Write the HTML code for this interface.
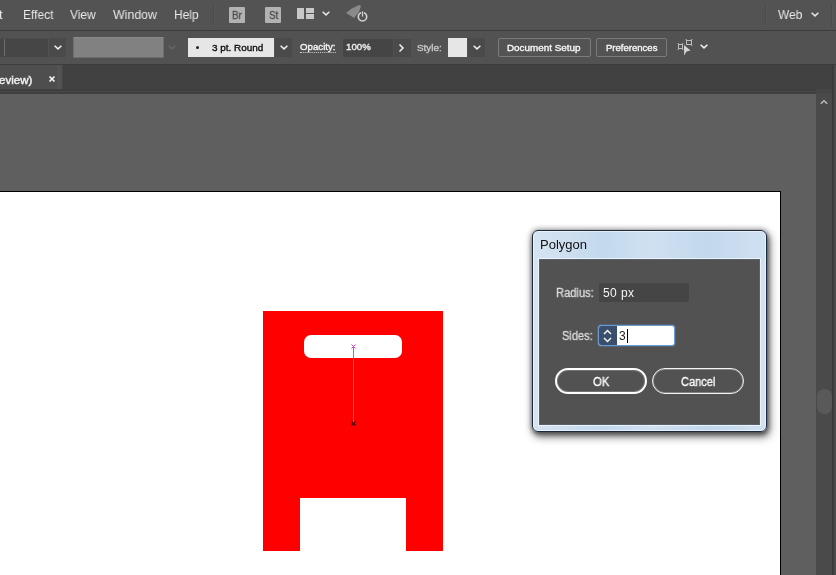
<!DOCTYPE html>
<html lang="en">
<head>
<meta charset="utf-8">
<title>Polygon</title>
<style>
*{box-sizing:border-box;margin:0;padding:0}
html,body{width:836px;height:575px;overflow:hidden;background:#5e5e5e}
body{position:relative;font-family:"Liberation Sans",sans-serif;font-size:12px;color:#e8e8e8;-webkit-font-smoothing:antialiased}
.abs,.t,svg{position:absolute}
.t{white-space:nowrap;line-height:1;transform-origin:0 50%;display:block;will-change:transform}
/* bars */
#menubar{left:0;top:0;width:836px;height:31px;background:#535353;border-bottom:1px solid #3c3c3c}
#ctrlbar{left:0;top:31px;width:836px;height:34px;background:#525252;border-bottom:1px solid #3c3c3c}
#tabbar{left:0;top:65px;width:836px;height:29px;background:linear-gradient(#414141 0,#414141 24px,#3e3e3e 24px,#3e3e3e 26px,#474747 26px,#474747 27px,#3f3f3f 27px)}
#tab{left:0;top:65px;width:63px;height:24px;background:#4e4e4e;border-right:1px solid #454545;box-shadow:inset -5px 0 0 #525252}
#canvas{left:0;top:94px;width:816px;height:481px;background:#5f5f5f}
#vscroll{left:816px;top:89px;width:16px;height:486px;background:#4a4a4a;border-top:5px solid #464646}
#vedge{left:832px;top:65px;width:4px;height:510px;background:#4b4b4b;border-left:2px solid #3b3b3b}
#thumb{left:817px;top:389px;width:15px;height:25px;border-radius:7px;background:#595959}
#artboard{left:0;top:191px;width:781px;height:384px;background:#fff;border-top:1px solid #000;border-right:1px solid #000}
.sep{width:1px;background:#4a4a4a;border-right:1px solid #585858;box-sizing:content-box}
.ico{background:#b2b2b2;color:#4c4c4c;border-radius:1px}
.ico .t{-webkit-text-stroke:.3px #4c4c4c}
.dk{background:#454545}
.btn{border:1px solid #7b7b7b;border-radius:2px;background:#535353}
.chevbox{background:#4a4a4a}
.lb{-webkit-text-stroke:.3px currentColor}
.cb{top:44px;font-size:9.2px;-webkit-text-stroke:.35px currentColor}
/* art */
#red{left:263px;top:311px;width:180px;height:240px;background:#fe0000}
#slot{left:304px;top:335px;width:98px;height:23px;border-radius:7px;background:#fff}
#notch{left:300px;top:498px;width:106px;height:54px;background:#fff}
#mline{left:353px;top:347px;width:1px;height:76px;background:#f535d6}
/* dialog */
#dshadow{left:532px;top:230px;width:235px;height:202px;border-radius:6px;box-shadow:0 0 5px 1px rgba(0,0,0,.3),2px 4px 9px 1px rgba(0,0,0,.5),1px 3px 4px rgba(0,0,0,.3)}
#dialog{left:532px;top:230px;width:235px;height:202px;border-radius:6px;border:1px solid #1d2a3c;background:linear-gradient(90deg,#d6e4f2 0%,#c4d9ee 30%,#cfe0f1 50%,#c3d8ed 75%,#d0e1f1 100%);box-shadow:inset 0 0 0 1px rgba(255,255,255,.55)}
#dbody{left:539px;top:259px;width:221px;height:166px;background:#525252;border:1px solid #5a626c;box-shadow:0 0 0 1px rgba(255,255,255,.6)}
#rinput{left:599px;top:283px;width:90px;height:19px;background:#454545;border-radius:2px}
#spin{left:598px;top:325px;width:77px;height:21px;border:1px solid #6a9bd0;border-radius:3px;background:#fff;overflow:hidden;box-shadow:0 0 0 1px rgba(90,140,205,.3)}
#spin i{position:absolute;left:0;top:0;width:18px;height:19px;background:#3b4f6c;display:block}
#caret{left:627px;top:329px;width:1px;height:14px;background:#000}
.pill{height:26px;border-radius:13px;background:#525252}
#ok{left:555px;top:368px;width:92px;border:2px solid #fff;box-shadow:inset 0 0 0 1px rgba(255,255,255,.2)}
#cancel{left:652px;top:368px;width:92px;border:1px solid #f4f4f4;box-shadow:inset 0 0 0 1px rgba(255,255,255,.28)}
</style>
</head>
<body>
<!-- menu bar -->
<div id="menubar" class="abs"></div>
<div id="ctrlbar" class="abs"></div>
<div id="tabbar" class="abs"></div>
<div id="tab" class="abs"></div>
<div id="canvas" class="abs"></div>
<div id="vscroll" class="abs"></div>
<div id="vedge" class="abs"></div>
<div id="thumb" class="abs"></div>
<div id="artboard" class="abs"></div>

<span class="t" style="left:-1px;top:8px;font-size:13px">t</span>
<span class="t" style="left:23px;top:8px;font-size:13px;transform:scaleX(.92)">Effect</span>
<span class="t" style="left:70px;top:8px;font-size:13px;transform:scaleX(.92)">View</span>
<span class="t" style="left:113px;top:8px;font-size:13px;transform:scaleX(.95)">Window</span>
<span class="t" style="left:174px;top:8px;font-size:13px;transform:scaleX(.92)">Help</span>
<div class="abs sep" style="left:213px;top:4px;height:22px"></div>
<div class="abs ico" style="left:229px;top:7px;width:16px;height:16px"><span class="t" style="left:3px;top:3px;font-size:11px;position:absolute;transform:scaleX(.9)">Br</span></div>
<div class="abs ico" style="left:265px;top:7px;width:16px;height:16px"><span class="t" style="left:4px;top:3px;font-size:11px;position:absolute;transform:scaleX(.9)">St</span></div>
<svg style="left:297px;top:8px" width="18" height="13" viewBox="0 0 18 13"><rect x="0" y="0" width="7" height="11" fill="#c8c8c8"/><rect x="9" y="0" width="8" height="5" fill="#c8c8c8"/><rect x="9" y="6" width="8" height="5" fill="#c8c8c8"/></svg>
<svg style="left:321px;top:10px" width="10" height="8" viewBox="0 0 10 8"><path d="M1.6 1.8 L5 4.900 L8.400 1.800" fill="none" stroke="#e6e6e6" stroke-width="1.500"/></svg>
<svg style="left:346px;top:3px" width="24" height="22" viewBox="0 0 24 22"><path d="M0 10 L5 6 L13 2 L15 3 L13 9 L8 15 L5 13 Z" fill="#8a8a8a"/><circle cx="16.500" cy="13.800" r="4.200" fill="#535353" stroke="#d4d4d4" stroke-width="1.600"/><rect x="15.500" y="8" width="2" height="6" fill="#d4d4d4" stroke="#535353" stroke-width=".8"/></svg>
<div class="abs sep" style="left:765px;top:4px;height:22px"></div>
<span class="t" style="left:778px;top:8px;font-size:13px;transform:scaleX(.92)">Web</span>
<svg style="left:810px;top:11px" width="10" height="8" viewBox="0 0 10 8"><path d="M1.6 1.8 L5 4.900 L8.400 1.800" fill="none" stroke="#e6e6e6" stroke-width="1.500"/></svg>
<div class="abs sep" style="left:831px;top:4px;height:22px"></div>

<!-- control bar -->
<div class="abs dk" style="left:0;top:38px;width:48px;height:19px;background:#464646;box-shadow:inset 0 1px 0 #4c4c4c"></div><div class="abs" style="left:4px;top:39px;width:1px;height:17px;background:#6c6c6c"></div>
<div class="abs chevbox" style="left:49px;top:38px;width:17px;height:19px"></div>
<svg style="left:52.500px;top:43.700px" width="10" height="8" viewBox="0 0 10 8"><path d="M1.6 1.8 L5 4.900 L8.400 1.800" fill="none" stroke="#f0f0f0" stroke-width="1.500"/></svg>
<div class="abs" style="left:73px;top:37px;width:91px;height:21px;background:#818181;border:1px solid #6e6e6e;border-top-color:#8a8a8a"></div>
<svg style="left:167px;top:44px" width="10" height="8" viewBox="0 0 10 8"><path d="M1.6 1.8 L5 4.900 L8.400 1.800" fill="none" stroke="#656565" stroke-width="1.500"/></svg>
<div class="abs" style="left:188px;top:38px;width:86px;height:19px;background:#e6e6e6"></div>
<div class="abs" style="left:196px;top:46px;width:3px;height:3px;border-radius:2px;background:#222"></div>
<span class="t cb" style="left:212px;top:44.3px;color:#111;transform:scaleX(1.08)">3 pt. Round</span>
<div class="abs chevbox" style="left:275px;top:38px;width:17px;height:19px"></div>
<svg style="left:279px;top:44px" width="10" height="8" viewBox="0 0 10 8"><path d="M1.6 1.8 L5 4.900 L8.400 1.800" fill="none" stroke="#f0f0f0" stroke-width="1.500"/></svg>
<span class="t cb" style="left:300px;top:43.3px;color:#f4f4f4;transform:scaleX(1.055);border-bottom:1px dotted #d0d0d0;padding-bottom:0px">Opacity:</span>
<div class="abs dk" style="left:343px;top:39px;width:50px;height:18px"></div>
<span class="t cb" style="left:346px;top:43.3px;color:#f0f0f0;transform:scaleX(1.06)">100%</span>
<div class="abs chevbox" style="left:394px;top:39px;width:17px;height:18px"></div>
<svg style="left:398px;top:43px" width="8" height="10" viewBox="0 0 8 10"><path d="M1.5 1.5 L5 5 L1.5 8.500" fill="none" stroke="#f0f0f0" stroke-width="1.500"/></svg>
<span class="t cb" style="left:417px;color:#c8c8c8;transform:scaleX(1.077)">Style:</span>
<div class="abs" style="left:448px;top:38px;width:19px;height:19px;background:#e6e6e6"></div>
<div class="abs chevbox" style="left:468px;top:38px;width:17px;height:19px"></div>
<svg style="left:472px;top:44px" width="10" height="8" viewBox="0 0 10 8"><path d="M1.6 1.8 L5 4.900 L8.400 1.800" fill="none" stroke="#f0f0f0" stroke-width="1.500"/></svg>
<div class="abs btn" style="left:498px;top:38px;width:93px;height:19px"></div>
<span class="t cb" style="left:507px;color:#f6f6f6;transform:scaleX(1.073)">Document Setup</span>
<div class="abs btn" style="left:596px;top:38px;width:71px;height:19px"></div>
<span class="t cb" style="left:606px;color:#f6f6f6;transform:scaleX(1.038)">Preferences</span>
<svg style="left:677px;top:38px" width="18" height="18" viewBox="0 0 18 18"><rect x="1.500" y="6.500" width="4" height="4" fill="none" stroke="#bdbdbd"/><rect x="9.500" y="2.500" width="5" height="4" fill="none" stroke="#bdbdbd"/><path d="M.5 5.500h1.500M5 5.500h1.500M.5 11.500h1.500M5 11.500h1.500M8.500 1.500h1.500M14 1.500h1.500M14 7.500h1.500" stroke="#9a9a9a" fill="none"/><path d="M7 7 L13.500 12.500 L9.500 13.500 L7.200 17.500 Z" fill="#d6d6d6"/></svg>
<svg style="left:698.500px;top:43px" width="10" height="8" viewBox="0 0 10 8"><path d="M1.6 1.8 L5 4.900 L8.400 1.800" fill="none" stroke="#f0f0f0" stroke-width="1.500"/></svg>

<!-- tab -->
<span class="t" style="left:-1px;top:74.500px;font-size:10.500px;-webkit-text-stroke:.4px #f2f2f2;color:#f2f2f2;transform:scaleX(1.1)">eview)</span>
<svg style="left:48px;top:75px" width="8" height="8" viewBox="0 0 8 8"><path d="M1.500 1.500 L6.500 6.500 M6.500 1.500 L1.500 6.500" fill="none" stroke="#f4f4f4" stroke-width="1.700"/></svg>
<svg style="left:819px;top:98px" width="10" height="8" viewBox="0 0 10 8"><path d="M1.8 5.800 L5 2.800 L8.200 5.800" fill="none" stroke="#bcbcbc" stroke-width="1.500"/></svg>

<!-- artwork -->
<div id="red" class="abs"></div>
<div id="slot" class="abs"></div>
<div id="notch" class="abs"></div>
<div id="mline" class="abs"></div>
<svg style="left:350px;top:343px" width="7" height="7" viewBox="0 0 7 7"><path d="M1.500 1.500 L5.500 5.500 M5.500 1.500 L1.500 5.500" stroke="#d040d0" stroke-width="1" fill="none"/></svg>
<svg style="left:350px;top:420px" width="7" height="7" viewBox="0 0 7 7"><path d="M1.5 1.5 L5.500 5.500 M5.500 1.500 L1.500 5.500" stroke="#40101a" stroke-width="1.200" fill="none"/></svg>

<!-- dialog -->
<div id="dshadow" class="abs"></div>
<div id="dialog" class="abs"></div>
<span class="t" style="left:540px;top:238px;font-size:13px;color:#111">Polygon</span>
<div id="dbody" class="abs"></div>
<span class="t lb" style="left:555.500px;top:287px;font-size:12px;color:#dedede;transform:scaleX(.93)">Radius:</span>
<div id="rinput" class="abs"></div>
<span class="t" style="left:603px;top:287px;font-size:12px;color:#f4f4f4;letter-spacing:.4px">50 px</span>
<span class="t lb" style="left:562px;top:330px;font-size:12px;color:#dedede;transform:scaleX(.92)">Sides:</span>
<div id="spin" class="abs"><i></i></div>
<svg style="left:602px;top:328px" width="11" height="16" viewBox="0 0 11 16"><path d="M2 6 L5.500 2.500 L9 6 M2 10 L5.500 13.500 L9 10" fill="none" stroke="#f4f4f4" stroke-width="1.500"/></svg>
<span class="t" style="left:619px;top:330px;font-size:12px;color:#222">3</span>
<div id="caret" class="abs"></div>
<div id="ok" class="abs pill"></div>
<span class="t lb" style="left:593px;top:376px;font-size:12px;color:#fff;transform:scaleX(.95)">OK</span>
<div id="cancel" class="abs pill"></div>
<span class="t lb" style="left:681px;top:376px;font-size:12px;color:#fff;transform:scaleX(.92)">Cancel</span>
</body>
</html>
